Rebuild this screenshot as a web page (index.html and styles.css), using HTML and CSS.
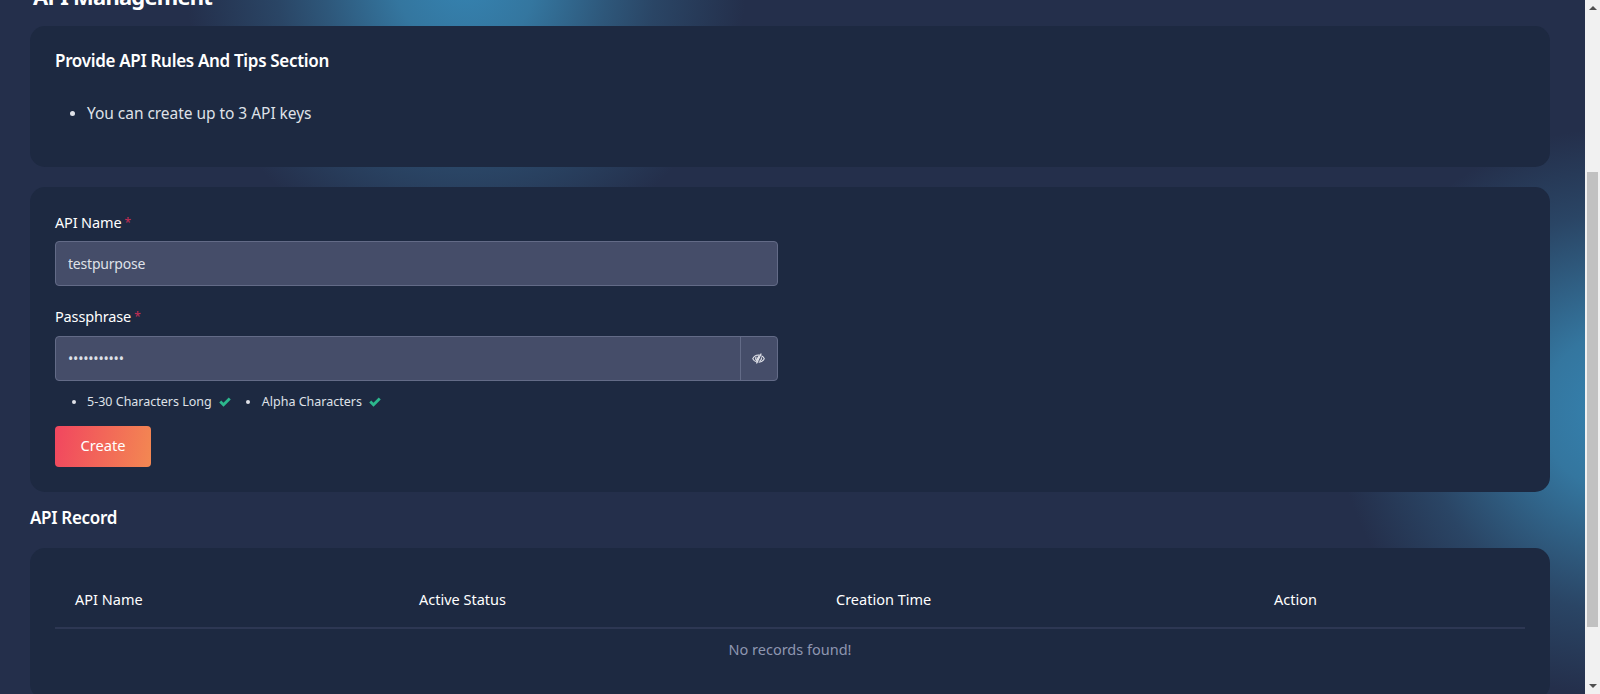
FILE: index.html
```html
<!DOCTYPE html>
<html lang="en">
<head>
    <meta charset="UTF-8">
    <meta name="viewport" content="width=device-width, initial-scale=1.0">
    <title>API Management</title>
    <link rel="stylesheet" href="styles.css">
</head>
<body>
    <main class="page">
        <h1 class="page-title">API Management</h1>

        <section class="card rules">
            <h2 class="heading rules-title">Provide API Rules And Tips Section</h2>
            <ul class="rules-list">
                <li><span>You can create up to 3 API keys</span></li>
            </ul>
        </section>

        <section class="card form-card">
            <form class="api-form">
                <label class="label" for="apiName">API Name<span class="required">*</span></label>
                <div class="input-group">
                    <input class="input" type="text" id="apiName" value="testpurpose">
                </div>

                <label class="label" for="passphrase">Passphrase<span class="required">*</span></label>
                <div class="input-group">
                    <input class="input password" type="password" id="passphrase" value="passphrases">
                    <button class="addon" type="button" aria-label="Show passphrase">
                        <svg width="13" height="11" viewBox="0 0 26 22" fill="none" stroke="#dfe1e8" stroke-width="2.2" stroke-linecap="round">
                            <path d="M10 18C6 17 3 14.500 1.500 11.500C4 6.500 8.500 4 13 4L15 4.200"/>
                            <path d="M19.500 5.800C22 7.200 23.700 9.200 24.500 11.500C22.500 15.500 18.500 18 14 18.200"/>
                            <path d="M8 8C6.500 11.500 8 14 9.500 15M19 9.500C19.300 12 18 14.500 16 15.400"/>
                            <path d="M13.500 7.500L10 13.500" stroke-width="3"/>
                            <path d="M18 2L9.500 20" stroke-width="2.600"/>
                        </svg>
                    </button>
                </div>

                <ul class="checks">
                    <li>
                        <span>5-30 Characters Long</span>
                        <svg class="tick" width="12" height="10" viewBox="0 0 24 20"><path d="M0.500 11L4.500 7L9 11.500L19.500 1L23.500 5L9 19.500Z" fill="#2cb88d"/></svg>
                    </li>
                    <li>
                        <span>Alpha Characters</span>
                        <svg class="tick" width="12" height="10" viewBox="0 0 24 20"><path d="M0.500 11L4.500 7L9 11.500L19.500 1L23.500 5L9 19.500Z" fill="#2cb88d"/></svg>
                    </li>
                </ul>

                <button class="btn" type="button">Create</button>
            </form>
        </section>

        <h2 class="heading record-title">API Record</h2>

        <section class="card record-card">
            <table class="table">
                <colgroup>
                    <col class="col-name">
                    <col class="col-status">
                    <col class="col-time">
                    <col class="col-action">
                </colgroup>
                <thead>
                    <tr>
                        <th>API Name</th>
                        <th>Active Status</th>
                        <th>Creation Time</th>
                        <th>Action</th>
                    </tr>
                </thead>
                <tbody>
                    <tr>
                        <td colspan="4">No records found!</td>
                    </tr>
                </tbody>
            </table>
        </section>
    </main>

    <div class="scrollbar">
        <span class="arrow arrow-up"></span>
        <div class="track"><div class="thumb"></div></div>
        <span class="arrow arrow-down"></span>
    </div>
</body>
</html>
```
FILE: styles.css
```css
* {
    box-sizing: border-box;
}

body {
    margin: 0;
    height: 694px;
    display: flex;
    overflow: hidden;
    font-family: "Noto Sans", "Open Sans", sans-serif;
    color: #fff;
    background-color: #242f4b;
}

.page {
    flex: 1;
    height: 694px;
    padding: 0 35px 0 30px;
    overflow: hidden;
    background:
        radial-gradient(circle at 466px -20px, #3583b1 0, #34769f 70px, #2e577a 142px, #2a4565 190px, #242f4b 280px, transparent 281px),
        radial-gradient(circle at 1622px 412px, #3583b1 0, #34769f 80px, #2e577a 155px, #2a4565 200px, #242f4b 285px, transparent 286px),
        #242f4b;
}

.page-title {
    margin: -19px 0 15px 3px;
    font-size: 22px;
    line-height: 30px;
    font-weight: 700;
    letter-spacing: -0.78px;
    white-space: nowrap;
}

.card {
    background-color: #1d2941;
    border-radius: 15px;
    padding: 0 25px;
}

.heading {
    margin: 0;
    font-size: 17px;
    line-height: 24px;
    font-weight: 600;
    letter-spacing: -0.32px;
}

/* rules */
.rules {
    height: 141px;
    padding-top: 23px;
}

.rules-list,
.checks {
    margin: 0;
    padding: 0;
    list-style: none;
}

.rules-list {
    margin-top: 28px;
    padding-left: 15px;
    font-size: 15.5px;
    line-height: 24px;
    letter-spacing: -0.04px;
    color: #dfe1e8;
}

.rules-list li,
.checks li {
    display: flex;
    align-items: center;
}

.rules-list li::before {
    content: "";
    width: 5px;
    height: 5px;
    margin-right: 12px;
    border-radius: 50%;
    background-color: #dfe1e8;
}

/* form */
.form-card {
    height: 305px;
    margin-top: 20px;
    padding-top: 23px;
}

.api-form {
    width: 723px;
}

.label {
    display: flex;
    align-items: center;
    gap: 3px;
    height: 24px;
    margin-bottom: 7px;
    font-size: 14.5px;
    letter-spacing: -0.15px;
}

.required {
    color: #c92d55;
    font-size: 12px;
}

.input-group {
    display: flex;
    height: 45px;
    margin-bottom: 18px;
    border: 1px solid #636b87;
    border-radius: 4px;
    background-color: #454d69;
    overflow: hidden;
}

.input-group + .label {
    margin-bottom: 8px;
}

.input {
    flex: 1;
    min-width: 0;
    padding: 0 12px;
    border: 0;
    background: none;
    color: #dfe1e8;
    font-family: inherit;
    font-size: 14px;
    letter-spacing: -0.2px;
}

.addon {
    display: flex;
    align-items: center;
    justify-content: center;
    width: 37px;
    padding: 0 1px 0 0;
    border: 0;
    border-left: 1px solid #636b87;
    background: none;
}

.checks {
    display: flex;
    gap: 15px;
    margin-top: -7px;
    padding-left: 17px;
    font-size: 12.5px;
    line-height: 20px;
    color: #dfe1e8;
}

.checks li::before {
    content: "";
    width: 4px;
    height: 4px;
    margin-right: 11px;
    border-radius: 50%;
    background-color: #dfe1e8;
}

.checks li + li::before {
    margin-right: 12px;
}

.tick {
    margin-left: 7px;
}

.btn {
    width: 96px;
    height: 41px;
    margin-top: 14px;
    padding: 0 0 3px;
    border: 0;
    border-radius: 4px;
    background: linear-gradient(100deg, #f1465f, #f38852);
    color: #fff;
    font-family: inherit;
    font-size: 14.7px;
}

/* records */
.record-title {
    margin: 14px 0 18px;
}

.record-card {
    height: 151px;
    padding-top: 24px;
}

.table {
    width: 100%;
    table-layout: fixed;
    border-collapse: collapse;
    font-size: 14.5px;
}

.col-name {
    width: 344px;
}

.col-status {
    width: 417px;
}

.col-time {
    width: 438px;
}

.table th {
    height: 56px;
    padding: 0 20px 1px;
    border-bottom: 2px solid #2d3753;
    font-weight: 400;
    text-align: left;
}

.table td {
    height: 43px;
    padding: 0 0 2px;
    color: #8e96b0;
    text-align: center;
}

/* scrollbar */
.scrollbar {
    display: flex;
    flex-direction: column;
    align-items: center;
    justify-content: space-between;
    width: 15px;
    height: 694px;
    padding: 6px 0;
    background-color: #f1f1f1;
}

.arrow {
    border: 4px solid transparent;
}

.arrow-up {
    border-top: 0;
    border-bottom-color: #505050;
}

.arrow-down {
    border-bottom: 0;
    border-top-color: #505050;
}

.track {
    flex: 1;
    padding-top: 162px;
}

.thumb {
    width: 11px;
    height: 455px;
    background-color: #c1c1c1;
}
```
